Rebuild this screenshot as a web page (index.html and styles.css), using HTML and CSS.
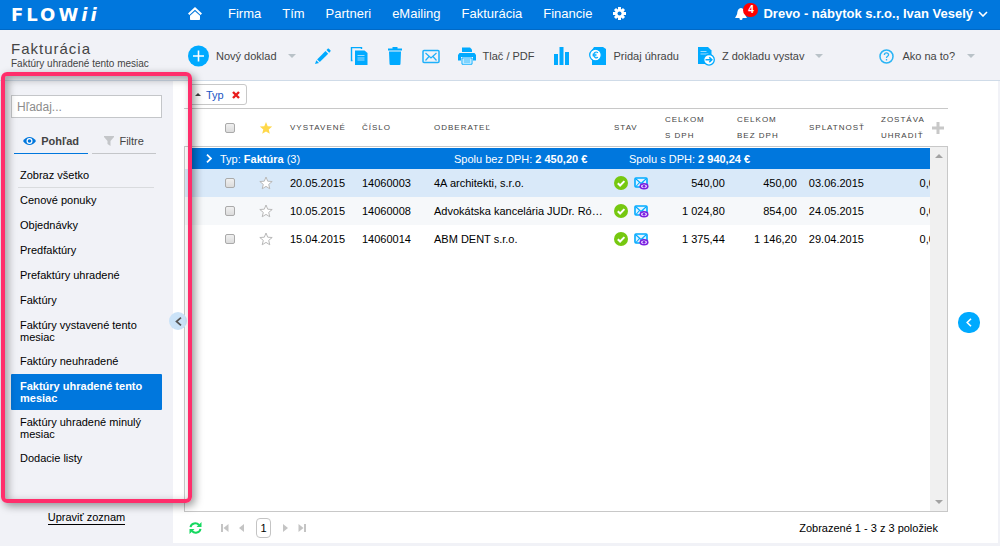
FILE: index.html
```html
<!DOCTYPE html>
<html lang="sk">
<head>
    <meta charset="UTF-8">
    <meta name="viewport" content="width=device-width, initial-scale=1.0">
    <title>Flowii - Fakturácia</title>
    <link rel="stylesheet" href="styles.css">
</head>
<body>

    <!-- Shared icons -->
    <svg class="sprite" aria-hidden="true">
        <symbol id="star" viewBox="0 0 14 14">
            <path d="M7 1l1.700 4.200 4.500.3-3.500 2.900 1.100 4.400L7 10.400l-3.800 2.400 1.100-4.400L.8 5.500l4.500-.3z"/>
        </symbol>
        <symbol id="done" viewBox="0 0 14 14">
            <circle cx="7" cy="7" r="7" fill="#76c810"/>
            <path d="M3.800 7.200l2.300 2.300 4.300-4.400" fill="none" stroke="#fff" stroke-width="2"/>
        </symbol>
        <symbol id="mail-seen" viewBox="0 0 15 14">
            <rect x="1" y="2" width="12" height="9" rx="1" fill="#e3f4ff" stroke="#0af" stroke-width="1.600"/>
            <path d="M2 3l5 4.500L12 3M2 10.500l3.500-4M12 10l-3.500-3.500" fill="none" stroke="#0af" stroke-width="1.100"/>
            <ellipse cx="10" cy="10.300" rx="4.500" ry="3.200" fill="#7a1fe0"/>
            <ellipse cx="10" cy="10.300" rx="3" ry="1.800" fill="#e6d4ff"/>
            <circle cx="10" cy="10.300" r="1.400" fill="#7a1fe0"/>
        </symbol>
        <symbol id="caret" viewBox="0 0 8 4">
            <path d="M0 0h8L4 4z" fill="#b9c2c8"/>
        </symbol>
    </svg>

    <header class="topbar">
        <a class="logo" href="#">FLOW<em>ii</em></a>
        <nav class="menu">
            <a href="#" aria-label="Domov">
                <svg width="14" height="13" viewBox="0 0 14 13" fill="#fff"><path d="M7 0l7 6.500-1.400 1.500L7 2.800 1.400 8 0 6.500z"/><path d="M7 4.200l5 4.600V12c0 .6-.4 1-1 1H3c-.6 0-1-.4-1-1V8.800z"/></svg>
            </a>
            <a href="#">Firma</a>
            <a href="#">Tím</a>
            <a href="#">Partneri</a>
            <a href="#">eMailing</a>
            <a href="#">Fakturácia</a>
            <a href="#">Financie</a>
            <a href="#" aria-label="Nastavenia">
                <svg width="13" height="13" viewBox="0 0 13 13"><g stroke="#fff" stroke-width="3"><path d="M6.500 0v13M0 6.500h13M2 2l9 9M11 2l-9 9"/></g><circle cx="6.500" cy="6.500" r="4.600" fill="#fff"/><circle cx="6.500" cy="6.500" r="2" fill="#07d"/></svg>
            </a>
        </nav>
        <div class="account">
            <button class="bell" aria-label="Upozornenia">
                <svg width="13" height="12" viewBox="0 0 13 12" fill="#fff"><path d="M6 0c3 .5 3.500 3 3.800 5.500.2 1.600 1.200 2.500 2.200 4.500H0c1-2 2-2.900 2.200-4.500C2.500 3 3 .5 6 0z"/><circle cx="6" cy="10.500" r="1.500"/></svg>
                <span class="badge">4</span>
            </button>
            <button class="user">Drevo - nábytok s.r.o., Ivan Veselý
                <svg width="10" height="6" viewBox="0 0 10 6" fill="none" stroke="#fff" stroke-width="1.600"><path d="M1 1l4 4 4-4"/></svg>
            </button>
        </div>
    </header>

    <div class="toolbar">
        <div class="heading">
            <h1>Fakturácia</h1>
            <p>Faktúry uhradené tento mesiac</p>
        </div>
        <div class="tools">
            <button class="tool">
                <svg width="21" height="22" viewBox="0 0 21 22"><circle cx="10.500" cy="11" r="10.500" fill="#0af"/><path d="M10.500 5.500v11M5 11h11" stroke="#fff" stroke-width="1.600"/></svg>
                Nový doklad
                <svg class="caret" width="8" height="4"><use href="#caret"/></svg>
            </button>
            <button class="tool" aria-label="Upraviť">
                <svg width="18" height="18" viewBox="0 0 18 18" fill="#0af"><path d="M11.500 4l2.700 2.700-8.400 8.400-2.700-2.700z"/><path d="M12.500 3l1.200-1.200c.4-.4.8-.4 1.200 0l1.500 1.500c.4.4.4.8 0 1.200L15.200 5.700z"/><path d="M2.300 13.300L5 15.900 1 17z"/></svg>
            </button>
            <button class="tool" aria-label="Kopírovať">
                <svg width="18" height="18" viewBox="0 0 18 18"><path d="M2.500 13.500h-1v-13h10v1.500" fill="none" stroke="#0af" stroke-width="1.400"/><path d="M5 3.500h9.500L17.500 6v12H5z" fill="#0af"/><path d="M7.500 8.500h7M7.500 11h7M7.500 13h7" stroke="#9bdcff"/></svg>
            </button>
            <button class="tool" aria-label="Zmazať">
                <svg width="18" height="18" viewBox="0 0 18 18" fill="#0af"><path d="M6.500 1.500V0h5v1.500H16v2H2v-2z"/><path d="M3 4.500h12l-.5 12c0 1-.5 1.500-1.500 1.500H5c-1 0-1.500-.5-1.500-1.500z"/></svg>
            </button>
            <button class="tool" aria-label="Poslať e-mail">
                <svg width="18" height="18" viewBox="0 0 18 18" fill="none" stroke="#1eb0fa"><rect x="1" y="3.500" width="16" height="12" rx="1" stroke-width="1.500"/><path d="M3.500 6L9 11l5.500-5M3.500 13.500l3.500-4M14.500 13.500l-3.500-4" stroke-width="1.200"/></svg>
            </button>
            <button class="tool">
                <svg width="18" height="18" viewBox="0 0 18 18"><path d="M4 5V.5h8L14 2.500V5z" fill="#0af"/><path d="M1.500 6h15L18 8v5.500h-3V10H3v3.500H0V8z" fill="#0af"/><path d="M4 11h10v6.200H4z" fill="#fff" stroke="#0af"/><path d="M5.500 13h7M5.500 15h7" stroke="#0af"/></svg>
                Tlač / PDF
            </button>
            <button class="tool" aria-label="Štatistiky">
                <svg width="18" height="18" viewBox="0 0 18 18" fill="#0af"><path d="M1 7h4v11H1zM6.500 0h4v18h-4zM12 5h4v13h-4z"/></svg>
            </button>
            <button class="tool">
                <svg width="18" height="18" viewBox="0 0 18 18"><path d="M5 0h9l3 2v16H3V3z" fill="#0af"/><circle cx="6.500" cy="8" r="5.800" fill="#fff" stroke="#0af" stroke-width="1.300"/><path d="M9 5.700C6.500 4 4.500 6 4.700 8s2 3.800 4.300 2.300M3.500 7.300h4M3.500 8.800h4" fill="none" stroke="#0af" stroke-width="1.100"/></svg>
                Pridaj úhradu
            </button>
            <button class="tool">
                <svg width="18" height="20" viewBox="0 0 18 20"><path d="M1 1h10l3.500 3.500V18H1z" fill="#0af"/><path d="M3.500 5.500h6M3.500 8h8" stroke="#9bdcff" stroke-width="1.200"/><circle cx="12" cy="13.800" r="5.300" fill="#fff" stroke="#0af" stroke-width="1.300"/><path d="M8.500 13.800h6M12.300 11.300l2.500 2.500-2.500 2.500" fill="none" stroke="#0af" stroke-width="1.600"/></svg>
                Z dokladu vystav
                <svg class="caret" width="8" height="4"><use href="#caret"/></svg>
            </button>
            <button class="tool help">
                <svg width="15" height="15" viewBox="0 0 15 15" fill="none" stroke="#2ab4f5"><circle cx="7.500" cy="7.500" r="6.500" stroke-width="1.500"/><path d="M5.400 6c0-2.700 4.200-2.700 4.200-.2 0 1.500-2.100 1.500-2.100 3.200M7.500 10v1.400" stroke-width="1.300"/></svg>
                Ako na to?
                <svg class="caret" width="8" height="4"><use href="#caret"/></svg>
            </button>
        </div>
    </div>

    <div class="page">
        <aside class="sidebar">
            <input class="search" type="text" placeholder="Hľadaj..." aria-label="Hľadaj">
            <div class="tabs">
                <button class="tab active">
                    <svg width="13" height="8" viewBox="0 0 13 8"><path d="M0 4c3.500-5.300 9.500-5.300 13 0-3.500 5.300-9.500 5.300-13 0z" fill="#07d"/><circle cx="6.500" cy="4" r="3" fill="#fff"/><circle cx="6.500" cy="4" r="1.800" fill="#07d"/></svg>
                    Pohľad
                </button>
                <button class="tab">
                    <svg width="10" height="10" viewBox="0 0 10 10"><path d="M0 0h10v1L6.500 5v5L3.500 8V5L0 1z" fill="#c4c6c9"/></svg>
                    Filtre
                </button>
            </div>
            <ul class="views">
                <li class="all"><a href="#">Zobraz všetko</a></li>
                <li><a href="#">Cenové ponuky</a></li>
                <li><a href="#">Objednávky</a></li>
                <li><a href="#">Predfaktúry</a></li>
                <li><a href="#">Prefaktúry uhradené</a></li>
                <li><a href="#">Faktúry</a></li>
                <li><a href="#">Faktúry vystavené tento mesiac</a></li>
                <li><a href="#">Faktúry neuhradené</a></li>
                <li><a class="current" href="#">Faktúry uhradené tento mesiac</a></li>
                <li><a href="#">Faktúry uhradené minulý mesiac</a></li>
                <li><a href="#">Dodacie listy</a></li>
            </ul>
            <a class="edit-list" href="#">Upraviť zoznam</a>
            <button class="collapse" aria-label="Skryť panel">
                <svg width="7" height="9" viewBox="0 0 7 9" fill="none" stroke="#555" stroke-width="1.700"><path d="M6 .7L1.500 4.500 6 8.300"/></svg>
            </button>
        </aside>

        <main class="content">
            <div class="grouping">
                <div class="chip">
                    <svg width="6" height="3" viewBox="0 0 6 3"><path d="M0 3h6L3 0z" fill="#444"/></svg>
                    <a href="#">Typ</a>
                    <button aria-label="Zrušiť zoskupenie">
                        <svg width="8" height="8" viewBox="0 0 8 8" stroke="#e81c1c" stroke-width="2.400"><path d="M1 1l6 6M7 1L1 7"/></svg>
                    </button>
                </div>
            </div>

            <div class="grid-head">
                <table>
                    <colgroup><col class="c-open"><col class="c-mark"><col class="c-mark"><col class="c-val"><col class="c-val"><col><col class="c-state"><col class="c-val"><col class="c-val"><col class="c-val"><col class="c-val"></colgroup>
                    <thead>
                        <tr>
                            <th></th>
                            <th class="mark"><input type="checkbox" aria-label="Označiť všetko"></th>
                            <th class="mark"><svg class="star-on" width="14" height="14"><use href="#star"/></svg></th>
                            <th>Vystavené</th>
                            <th>Číslo</th>
                            <th>Odberateľ</th>
                            <th>Stav</th>
                            <th>Celkom<br>s DPH</th>
                            <th>Celkom<br>bez DPH</th>
                            <th>Splatnosť</th>
                            <th>
                                <div class="last">
                                    <span>Zostáva<br>uhradiť</span>
                                    <button aria-label="Pridať stĺpec"><svg width="12" height="12" viewBox="0 0 12 12" stroke="#c8c8c8" stroke-width="3"><path d="M6 0v12M0 6h12"/></svg></button>
                                </div>
                            </th>
                        </tr>
                    </thead>
                </table>
            </div>

            <div class="grid-body">
                <div class="rows">
                    <table>
                        <colgroup><col class="c-open"><col class="c-mark"><col class="c-mark"><col class="c-val"><col class="c-val"><col><col class="c-state"><col class="c-val"><col class="c-val"><col class="c-val"><col class="c-val"></colgroup>
                        <tbody>
                            <tr class="group">
                                <td colspan="11">
                                    <div class="group-row">
                                        <svg width="6" height="9" viewBox="0 0 6 9" fill="none" stroke="#fff" stroke-width="1.800"><path d="M1 .7l4 3.800-4 3.800"/></svg>
                                        <span>Typ: <b>Faktúra</b> (3)</span>
                                        <span>Spolu bez DPH: <b>2 450,20 €</b></span>
                                        <span>Spolu s DPH: <b>2 940,24 €</b></span>
                                    </div>
                                </td>
                            </tr>
                            <tr class="selected">
                                <td></td>
                                <td class="mark"><input type="checkbox" aria-label="Označiť 14060003"></td>
                                <td class="mark"><svg class="star-off" width="14" height="14"><use href="#star"/></svg></td>
                                <td>20.05.2015</td>
                                <td>14060003</td>
                                <td>4A architekti, s.r.o.</td>
                                <td><div class="state"><svg width="14" height="14"><use href="#done"/></svg><svg width="15" height="14"><use href="#mail-seen"/></svg></div></td>
                                <td class="num">540,00</td>
                                <td class="num">450,00</td>
                                <td>03.06.2015</td>
                                <td class="num">0,00</td>
                            </tr>
                            <tr class="even">
                                <td></td>
                                <td class="mark"><input type="checkbox" aria-label="Označiť 14060008"></td>
                                <td class="mark"><svg class="star-off" width="14" height="14"><use href="#star"/></svg></td>
                                <td>10.05.2015</td>
                                <td>14060008</td>
                                <td>Advokátska kancelária JUDr. Ró…</td>
                                <td><div class="state"><svg width="14" height="14"><use href="#done"/></svg><svg width="15" height="14"><use href="#mail-seen"/></svg></div></td>
                                <td class="num">1 024,80</td>
                                <td class="num">854,00</td>
                                <td>24.05.2015</td>
                                <td class="num">0,00</td>
                            </tr>
                            <tr>
                                <td></td>
                                <td class="mark"><input type="checkbox" aria-label="Označiť 14060014"></td>
                                <td class="mark"><svg class="star-off" width="14" height="14"><use href="#star"/></svg></td>
                                <td>15.04.2015</td>
                                <td>14060014</td>
                                <td>ABM DENT s.r.o.</td>
                                <td><div class="state"><svg width="14" height="14"><use href="#done"/></svg><svg width="15" height="14"><use href="#mail-seen"/></svg></div></td>
                                <td class="num">1 375,44</td>
                                <td class="num">1 146,20</td>
                                <td>29.04.2015</td>
                                <td class="num">0,00</td>
                            </tr>
                        </tbody>
                    </table>
                </div>
                <div class="scrollbar">
                    <svg width="8" height="4" viewBox="0 0 8 4"><path d="M0 4h8L4 0z" fill="#a3a3a3"/></svg>
                    <svg width="8" height="4" viewBox="0 0 8 4"><path d="M0 0h8L4 4z" fill="#a3a3a3"/></svg>
                </div>
            </div>

            <div class="pager">
                <button class="refresh" aria-label="Obnoviť">
                    <svg width="13" height="12" viewBox="0 0 13 12"><path d="M1.500 5.200C2.200 1 7.500.2 10 3M11.500 6.800C10.800 11 5.500 11.800 3 9" fill="none" stroke="#16d860" stroke-width="2"/><path d="M12.500 0v5h-5zM.5 12V7h5z" fill="#16d860"/></svg>
                </button>
                <button aria-label="Prvá strana"><svg width="8" height="8" viewBox="0 0 8 8" fill="#c4c4c4"><path d="M0 0h2v8H0zM7.500 0v8L2.500 4z"/></svg></button>
                <button aria-label="Predošlá strana"><svg width="5" height="8" viewBox="0 0 5 8" fill="#c4c4c4"><path d="M5 0v8L0 4z"/></svg></button>
                <button class="number">1</button>
                <button aria-label="Ďalšia strana"><svg width="5" height="8" viewBox="0 0 5 8" fill="#c4c4c4"><path d="M0 0v8l5-4z"/></svg></button>
                <button aria-label="Posledná strana"><svg width="8" height="8" viewBox="0 0 8 8" fill="#c4c4c4"><path d="M6 0h2v8H6zM.5 0v8l5-4z"/></svg></button>
                <span class="count">Zobrazené 1 - 3 z 3 položiek</span>
            </div>

            <button class="expand" aria-label="Zobraziť detail">
                <svg width="6" height="9" viewBox="0 0 6 9" fill="none" stroke="#fff" stroke-width="1.600"><path d="M5 .7L1.200 4.500 5 8.300"/></svg>
            </button>
        </main>

        <!-- Marks the list of views -->
        <div class="marker"></div>
    </div>

</body>
</html>
```
FILE: styles.css
```css
* {
    box-sizing: border-box;
}

body {
    margin: 0;
    min-height: 100vh;
    display: flex;
    flex-direction: column;
    font-family: "Liberation Sans", Arial, sans-serif;
    font-size: 11px;
    color: #000;
    background-color: #f1f2f7;
}

a {
    color: inherit;
    text-decoration: none;
}

button {
    margin: 0;
    padding: 0;
    border: none;
    background: none;
    font: inherit;
    color: inherit;
    cursor: pointer;
}

svg {
    display: block;
    flex: none;
}

.sprite {
    position: absolute;
    width: 0;
    height: 0;
}

/* Top bar */
.topbar {
    display: flex;
    align-items: center;
    height: 30px;
    padding: 0 12px 0 11px;
    background-color: #0077dd;
    border-bottom: 1px solid #0069c6;
    color: #fff;
}

.logo {
    width: 177px;
    font-family: "DejaVu Sans", sans-serif;
    font-size: 18px;
    font-weight: bold;
    letter-spacing: 3px;
}

.menu {
    display: flex;
    align-items: center;
    gap: 21px;
    padding-bottom: 2px;
    font-size: 13px;
}

.menu a:first-child {
    margin-right: 5px;
}

.account {
    display: flex;
    align-items: center;
    gap: 15px;
    margin-left: auto;
    padding-bottom: 2px;
}

.bell {
    position: relative;
}

.badge {
    position: absolute;
    left: 8px;
    top: -5px;
    width: 15px;
    height: 14px;
    border-radius: 7px;
    background-color: #f00;
    font-size: 10px;
    font-weight: bold;
    line-height: 14px;
}

.user {
    display: flex;
    align-items: center;
    gap: 5px;
    font-size: 13px;
    font-weight: bold;
}

/* Toolbar */
.toolbar {
    display: flex;
    align-items: center;
    height: 51px;
    padding-left: 11px;
    border-bottom: 1px solid #cfdbe8;
    color: #444;
}

.heading {
    width: 177px;
}

.heading h1 {
    margin: 0;
    font-size: 15px;
    font-weight: normal;
    line-height: 18px;
    letter-spacing: 1px;
}

.heading p {
    margin: 0;
    font-size: 10px;
    line-height: 12px;
}

.tools {
    flex: 1;
    display: flex;
    align-items: center;
    gap: 18px;
    padding: 2px 25px 0 0;
}

.tool {
    display: flex;
    align-items: center;
    gap: 7px;
    white-space: nowrap;
}

.caret {
    margin-left: 4px;
}

.help {
    gap: 8px;
    margin-left: auto;
}

/* Page */
.page {
    position: relative;
    flex: 1;
    display: flex;
    padding: 0 2px 3px 0;
}

.sidebar {
    position: relative;
    display: flex;
    flex-direction: column;
    width: 173px;
    padding: 14px 11px 18px;
}

.search {
    width: 100%;
    height: 23px;
    padding: 0 5px;
    border: 1px solid #c4c6c9;
    font: inherit;
    font-size: 12px;
    background-color: #fff;
}

.search::placeholder {
    color: #8c8c8c;
}

.tabs {
    display: flex;
    gap: 4px;
    margin: 11px 6px 9px 3px;
}

.tab {
    flex: 6;
    display: flex;
    align-items: center;
    justify-content: center;
    gap: 5px;
    height: 25px;
    border-bottom: 1px solid #c4c6c9;
    color: #444;
}

.tab.active {
    flex: 7;
    border-bottom-color: #0077dd;
    font-weight: bold;
}

.views {
    list-style: none;
    margin: 0;
    padding: 0;
}

.views li {
    min-height: 25px;
}

.views a {
    display: block;
    padding: 6px 9px;
    line-height: 12px;
}

.views .all {
    margin: 0 8px 0 7px;
    border-bottom: 1px solid #d9dbde;
}

.views .all a {
    padding: 6px 2px;
}

.views .current {
    border-radius: 1px;
    background-color: #0077dd;
    color: #fff;
    font-weight: bold;
}

.edit-list {
    align-self: center;
    margin-top: auto;
    border-bottom: 1px solid #000;
    line-height: 13px;
}

.collapse {
    position: absolute;
    right: -14px;
    top: 231px;
    display: flex;
    align-items: center;
    justify-content: center;
    width: 18px;
    height: 18px;
    border-radius: 50%;
    background-color: #cbe3f8;
    z-index: 1;
}

.content {
    position: relative;
    flex: 1;
    display: flex;
    flex-direction: column;
    min-width: 0;
    padding: 0 50px 0 11px;
    background-color: #fff;
}

.grouping {
    display: flex;
    padding: 3px 4px;
}

.chip {
    display: flex;
    align-items: center;
    gap: 5px;
    height: 21px;
    padding: 0 6px;
    border: 1px solid #c8c8c8;
    border-radius: 3px;
    color: #1a56c4;
}

.chip button {
    margin-left: 3px;
}

/* Invoice grid */
table {
    table-layout: fixed;
    width: 100%;
    border-collapse: collapse;
}

.c-open {
    width: 27px;
}

.c-mark {
    width: 36px;
}

.c-val {
    width: 72px;
}

.c-state {
    width: 51px;
}

th, td {
    padding: 0 6px;
    text-align: left;
    white-space: nowrap;
}

.grid-head {
    padding: 0 1px;
    border-top: 1px solid #c8c8c8;
}

th {
    height: 37px;
    font-size: 8px;
    font-weight: normal;
    line-height: 16px;
    letter-spacing: 1px;
    text-transform: uppercase;
    color: #444;
}

.last {
    display: flex;
    align-items: center;
    justify-content: space-between;
    margin-right: -3px;
}

.grid-body {
    flex: 1;
    display: flex;
    border: 1px solid #c8c8c8;
}

.rows {
    flex: 1;
    overflow: hidden;
    padding-top: 1px;
}

/* The columns run on under the scrollbar */
.rows table {
    width: calc(100% + 17px);
}

td {
    height: 28px;
}

.mark input,
.mark svg {
    display: block;
    margin: 0 auto;
}

input[type="checkbox"] {
    appearance: none;
    width: 10px;
    height: 10px;
    border: 1px solid #aaa;
    border-radius: 2px;
    background: linear-gradient(#f0f0f0, #dcdcdc);
}

.star-on {
    fill: #ffd84a;
}

.star-off {
    fill: #fff;
    stroke: #b8b8b8;
}

.num {
    text-align: right;
}

.selected {
    background-color: #d9e9f9;
}

.even {
    background-color: #f6f8fa;
}

.state {
    display: flex;
    gap: 6px;
}

.group td {
    height: 21px;
    padding: 0 0 0 5px;
}

.group-row {
    display: grid;
    grid-template-columns: 6px 226px 167px 1fr;
    column-gap: 8px;
    align-items: center;
    height: 21px;
    padding-left: 16px;
    border-radius: 2px;
    background-color: #0077dd;
    color: #fff;
}

.scrollbar {
    display: flex;
    flex-direction: column;
    align-items: center;
    justify-content: space-between;
    width: 17px;
    padding: 7px 0;
    background-color: #f0f0f0;
}

/* Pager */
.pager {
    display: flex;
    align-items: center;
    gap: 10px;
    height: 31px;
    padding: 0 10px 0 5px;
}

.refresh {
    margin-right: 9px;
}

.number {
    width: 15px;
    height: 20px;
    margin: 0 2px;
    border: 1px solid #c4c4c4;
    border-radius: 4px;
}

.count {
    margin-left: auto;
}

.expand {
    position: absolute;
    right: 18px;
    top: 231px;
    display: flex;
    align-items: center;
    justify-content: center;
    width: 22px;
    height: 21px;
    border-radius: 10px;
    background-color: #00aaff;
}

.marker {
    position: absolute;
    left: 1px;
    top: -9px;
    width: 191px;
    height: 431px;
    border: 4px solid #ff2e6b;
    border-radius: 6px;
    box-shadow: 3px 3px 8px rgba(0, 0, 0, 0.4), inset 3px 3px 8px rgba(0, 0, 0, 0.35);
    pointer-events: none;
    z-index: 2;
}
```
